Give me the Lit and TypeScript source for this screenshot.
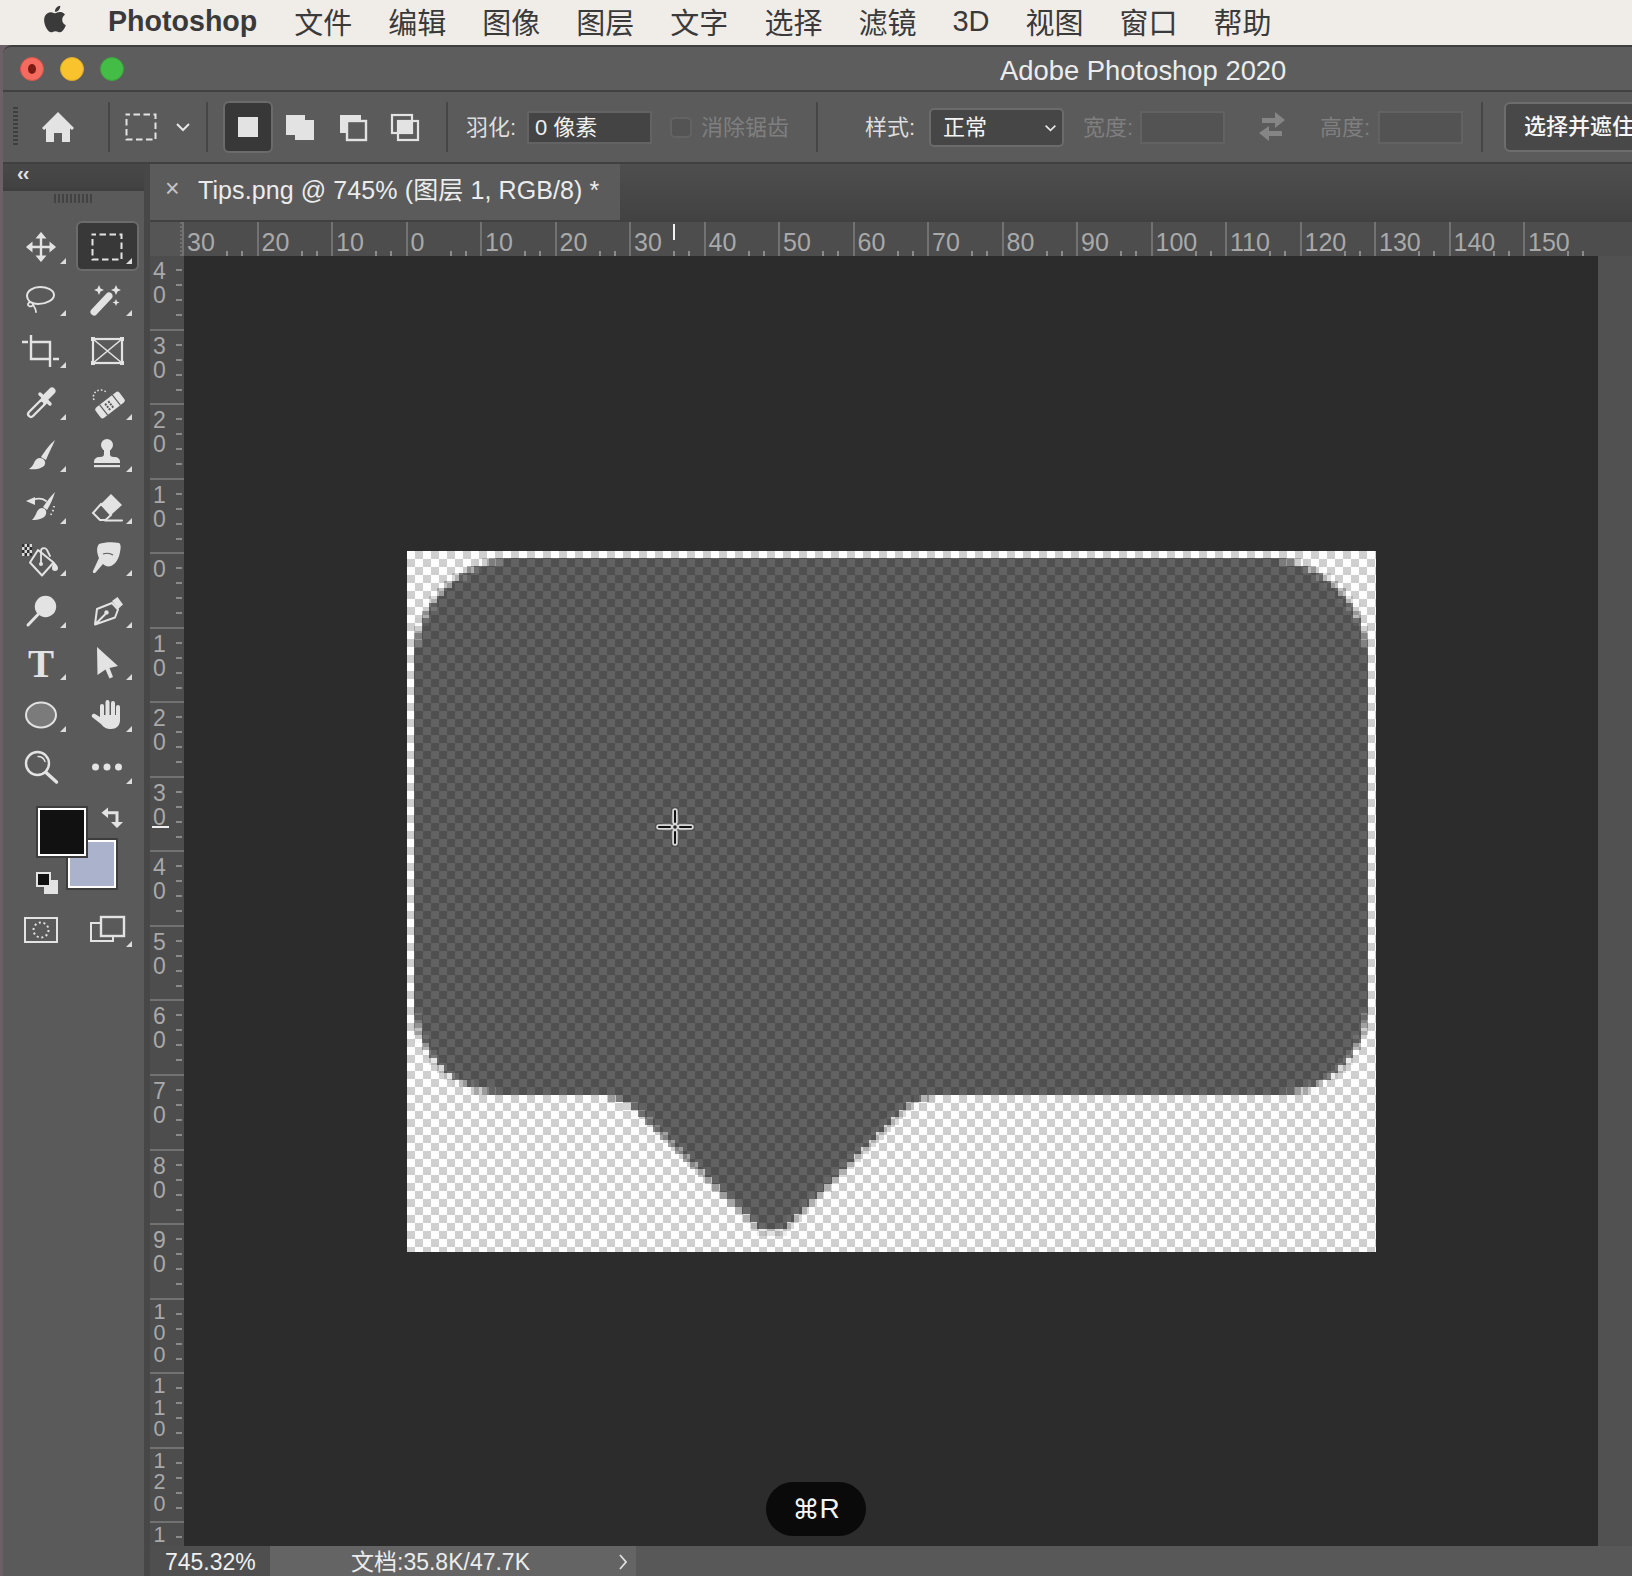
import {LitElement, html, svg, css} from 'lit';
import {customElement} from 'lit/decorators.js';

const INK = '#e3e3e3';
const BG = '#5a5a5a';

const menus = ['文件', '编辑', '图像', '图层', '文字', '选择', '滤镜', '3D', '视图', '窗口', '帮助'];
const hLabels = [30, 20, 10, 0, 10, 20, 30, 40, 50, 60, 70, 80, 90, 100, 110, 120, 130, 140, 150];
const vLabels = [40, 30, 20, 10, 0, 10, 20, 30, 40, 50, 60, 70, 80, 90, 100, 110, 120, 1];

// 40x40 icons, centred on the tool cell
const line = (d: string, w = 2.5) =>
  svg`<path d=${d} fill="none" stroke=${INK} stroke-width=${w} stroke-linecap="round" stroke-linejoin="round"/>`;

const marquee = svg`<rect x="5.5" y="7.5" width="29" height="25" fill="none" stroke=${INK} stroke-width="2" stroke-dasharray="6.5 3.5" stroke-dashoffset="3"/>`;

const tools: {icon: unknown; more: boolean; active?: boolean}[] = [
  {more: true, icon: svg`
    ${line('M20 7v26M7 20h26', 2.4)}
    <path fill=${INK} d="M20 5l5.5 6.5h-11zM20 35l5.5-6.5h-11zM5 20l6.5-5.5v11zM35 20l-6.5-5.5v11z"/>`},
  {more: true, active: true, icon: marquee},
  {more: true, icon: svg`
    ${line('M6 17c0-5 6-9 13-9 7 0 14 3 14 8s-8 9-16 9c-3 0-6-1-8-2-2-2-3-4-3-6z', 2)}
    ${line('M9 23c-2 1-3 3-1 4 2 1 4 0 4-2 0 2 3 4 3 8', 1.8)}`},
  {more: true, icon: svg`
    ${line('M7 33l15-16', 7)}
    ${line('M21.5 17.5l2-2', 2.5)}
    <path fill=${INK} d="M12 6l1.5 3.5L17 11l-3.5 1.5L12 16l-1.5-3.5L7 11l3.5-1.5zM29 6l1.5 3.5L34 11l-3.5 1.5L29 16l-1.5-3.5L24 11l3.5-1.5zM29 20l1 2.5 2.5 1-2.5 1-1 2.5-1-2.5-2.5-1 2.5-1z"/>`},
  {more: true, icon: svg`
    <path fill="none" stroke=${INK} stroke-width="2.4" d="M1 11h6M10 4v24h19V11H10M32 28h6M29 11v25"/>`},
  {more: false, icon: svg`
    <rect x="6" y="8" width="29" height="24" fill="none" stroke=${INK} stroke-width="2.2"/>
    <path d="M6 8l29 24M35 8L6 32" stroke=${INK} stroke-width="1.6"/>
    <path fill=${INK} d="M4 6h4v4H4zM33 6h4v4h-4zM4 30h4v4H4zM33 30h4v4h-4z"/>`},
  {more: true, icon: svg`
    ${line('M24 15l7-7', 7)}
    ${line('M19 11l10 10', 3.5)}
    ${line('M22 19L10 31', 8)}
    <path d="M20.5 20.5L10 31" stroke=${BG} stroke-width="3.4" stroke-linecap="round"/>`},
  {more: true, icon: svg`
    <g transform="rotate(-38 23 22)">
      <rect x="8" y="15.5" width="30" height="13" rx="2.5" fill=${INK}/>
      <path stroke=${BG} stroke-width="1.2" d="M15 15.5v13M31 15.5v13"/>
      <path stroke=${BG} stroke-width="2" stroke-dasharray="2 2" d="M19 19h8M19 22h8M19 25h8"/>
    </g>
    <path fill="none" stroke=${INK} stroke-width="1.6" stroke-dasharray="1.6 2" d="M7 17c-2-5 1-10 7-10 2 0 4 1 5 2"/>`},
  {more: true, icon: svg`
    <path fill=${INK} d="M34 5C31 12 27 20 25 25l-5-3C24 16 29 9 34 5z"/>
    <path fill=${INK} d="M19 23c3 0 6 3 5 6-1 4-8 6-16 5 3-2 4-4 5-6 1-3 3-5 6-5z"/>`},
  {more: true, icon: svg`
    <circle cx="20" cy="10" r="6" fill=${INK}/>
    <path fill=${INK} d="M17 13h6v6c0 2 1 3 4 3 4 0 6 2 6 5v1H7v-1c0-3 2-5 6-5 3 0 4-1 4-3z"/>
    <rect x="7" y="30" width="26" height="2.2" fill=${INK}/>`},
  {more: true, icon: svg`
    <path fill=${INK} d="M5 14l9-4v8z"/>
    ${line('M12 13c5-2 9-2 13 1', 1.8)}
    <path fill=${INK} d="M34 5C32 12 29 18 26 23l-4-3C26 14 30 9 34 5z"/>
    <path fill=${INK} d="M21 21c3 0 5 3 4 6-1 4-7 6-14 6 2-2 3-4 4-6 1-3 3-6 6-6z"/>
    <path d="M33 19c0 3-2 7-4 10" fill="none" stroke=${INK} stroke-width="1.8" stroke-dasharray="1.5 2.5"/>`},
  {more: true, icon: svg`
    <path fill=${INK} d="M24 7l11 11-11 10-10-11z"/>
    <path fill="none" stroke=${INK} stroke-width="2" d="M14 17l10 11-5.5 5H13l-7-7z"/>
    ${line('M18 33.5h17', 2)}`},
  {more: true, icon: svg`
    <path fill="#d8d8d8" d="M1 5h10v12H1z"/>
    <path fill="#2f2f2f" d="M1 5h2.5v3H1zM6 5h2.5v3H6zM3.5 8H6v3H3.5zM8.5 8H11v3H8.5zM1 11h2.5v3H1zM6 11h2.5v3H6zM3.5 14H6v3H3.5zM8.5 14H11v3H8.5z"/>
    <path fill="none" stroke=${INK} stroke-width="2" stroke-linejoin="round" d="M17 11l15.5 12.5L21 36.5 9 23.5z"/>
    ${line('M20 24V12c0-3 4-4 6-1l3 6', 1.8)}
    <circle cx="20" cy="25" r="2" fill=${INK}/>
    <path fill=${INK} d="M33 23c2 2 4 4 4 6a3 3 0 0 1-6 0c0-2 1-4 2-6z"/>`},
  {more: true, icon: svg`
    <path fill=${INK} d="M12 5c6-2 14-2 20-1 2 1 2 5 1 9-1 6-4 12-9 14-3 1-6 0-8-2L9 33c-1 2-4 1-3-1l6-13c-2-5-3-10 0-14z"/>
    <path fill="none" stroke=${BG} stroke-width="1.2" d="M16 15c3-1 7-1 10 1"/>`},
  {more: true, icon: svg`
    <circle cx="24.5" cy="15.5" r="10.7" fill=${INK}/>
    ${line('M17 23.5L7 34', 3)}`},
  {more: true, icon: svg`
    <path fill=${INK} d="M25 10l5.5-4 5.500 7.500-5 4.500z"/>
    <path fill="none" stroke=${INK} stroke-width="2" stroke-linejoin="round" d="M25 12l-15 6-2 15.5 20-7 3-8zM8.5 33L18.5 23"/>
    <circle cx="19.5" cy="21.5" r="2.2" fill=${INK}/>`},
  {more: true, icon: svg`<text x="20" y="33.5" text-anchor="middle" font-family="Liberation Serif" font-weight="700" font-size="39" fill=${INK}>T</text>`},
  {more: true, icon: svg`<path fill=${INK} d="M10 4l21 19-8.5 2 3.5 9-3.5 1.5-4-9-8 5.5z"/>`},
  {more: true, icon: svg`<ellipse cx="20" cy="20" rx="15" ry="12.5" fill="#7b7b7b" stroke=${INK} stroke-width="2"/>`},
  {more: true, icon: svg`
    ${line('M15 25V11M20.5 24V7M26 24V8M31 25V12', 4)}
    <path fill=${INK} d="M13 20h20v5c0 6-4 9-9 9-4 0-7-1-10-5l-9-7c-1-2 1-4 3-3l5 3z"/>`},
  {more: false, icon: svg`
    <circle cx="16.5" cy="16.5" r="11.5" fill="none" stroke=${INK} stroke-width="2.4"/>
    ${line('M25 25.5l10.5 9.5', 3.4)}
    ${line('M17 9.5c3 0 6 2 7 5', 1.4)}`},
  {more: true, icon: svg`
    <circle cx="8.5" cy="20" r="3.5" fill=${INK}/>
    <circle cx="20" cy="20" r="3.5" fill=${INK}/>
    <circle cx="31.5" cy="20" r="3.5" fill=${INK}/>`},
];

// The bubble in Tips.png, drawn as the document's own 7.45px pixels.
const PX = 7.45;
const COLS = 130;
const ROWS = 94;

function insideBubble(x: number, y: number) {
  const [l, t, r, b] = [7, 7, 961, 544];
  if (y >= b - 1 && y <= 679) {
    const d = y - b;
    const flare = Math.max(0, 12 - d) * 1.2;
    if (x >= 213 - flare + d * 1.044 && x <= 511 + flare - d * 0.99) return true;
  }
  if (x < l || x > r || y < t || y > b) return false;
  const rad = y < (t + b) / 2 ? 104 : 94;
  const cx = x < l + rad ? l + rad : x > r - rad ? r - rad : x;
  const cy = y < t + rad ? t + rad : y > b - rad ? b - rad : y;
  return (x - cx) ** 2 + (y - cy) ** 2 <= rad * rad;
}

function bubbleRuns() {
  const out: {x: number; y: number; w: number; c: number}[] = [];
  for (let row = 0; row < ROWS; row++) {
    let open: {x: number; y: number; w: number; c: number} | null = null;
    for (let col = 0; col < COLS; col++) {
      let hits = 0;
      for (let i = 0; i < 5; i++) {
        for (let j = 0; j < 5; j++) {
          if (insideBubble((col + (i + 0.5) / 5) * PX, (row + (j + 0.5) / 5) * PX)) hits++;
        }
      }
      const c = hits / 25;
      if (open && open.c === c) {
        open.w += PX;
      } else {
        open = c > 0 ? {x: col * PX, y: row * PX, w: PX, c} : null;
        if (open) out.push(open);
      }
    }
  }
  return out;
}

const runs = bubbleRuns();

@customElement('app-root')
export class AppRoot extends LitElement {
  static styles = css`
    :host {
      display: flex;
      flex-direction: column;
      width: 1632px;
      height: 1576px;
      overflow: hidden;
      background: #6c6068;
      font-family: "Liberation Sans", "Noto Sans CJK SC", sans-serif;
    }

    svg { display: block; flex: none; }

    .menubar {
      display: flex;
      align-items: center;
      flex: none;
      box-sizing: border-box;
      height: 45px;
      padding: 0 0 3px 39px;
      background: #f0ede8;
      color: #3a3a3a;
      font-size: 29px;
    }
    .apple { width: 32px; height: 36px; margin-top: -4px; }
    .brand { margin-left: 37px; margin-right: 37px; font-weight: 700; font-size: 28.6px; }
    .menus { display: flex; align-items: center; gap: 36px; }
    .menus span { white-space: nowrap; }

    .window {
      display: flex;
      flex-direction: column;
      flex: 1;
      min-height: 0;
      margin-left: 3px;
      border-top: 2px solid #3e3e3e;
      border-top-left-radius: 9px;
      background: #5a5a5a;
      overflow: hidden;
    }

    .titlebar {
      display: flex;
      align-items: center;
      flex: none;
      height: 43px;
      padding-left: 17px;
      border-bottom: 2px solid #414141;
      background: #5d5d5d;
    }
    .light {
      width: 24px;
      height: 24px;
      margin-right: 16px;
      border-radius: 50%;
      box-sizing: border-box;
    }
    .light.red { display: flex; align-items: center; justify-content: center; background: #f56b5f; border: 1px solid #d9544a; }
    .light.red::after { content: ""; width: 8px; height: 10px; border-radius: 50%; background: #7c1a14; }
    .light.yellow { background: #f9c32e; border: 1px solid #dfa829; }
    .light.green { background: #43bd45; border: 1px solid #3aa53c; }
    .title { margin: 4px 0 0 860px; color: #ececec; font-size: 27.4px; white-space: nowrap; }

    .options {
      display: flex;
      align-items: center;
      flex: none;
      height: 70px;
      border-bottom: 2px solid #404040;
      background: #5b5b5b;
      color: #dedede;
      font-size: 22px;
    }
    .options > * { flex: none; }
    .grip-v {
      width: 5px;
      height: 40px;
      margin-left: 10px;
      background: repeating-linear-gradient(#3f3f3f 0 2px, transparent 2px 4px);
    }
    .sep { width: 2px; height: 50px; background: #464646; }
    .seg {
      display: flex;
      align-items: center;
      justify-content: center;
      width: 40px;
      height: 40px;
    }
    .seg.small { width: 20px; }
    .seg.on {
      box-sizing: border-box;
      width: 50px;
      height: 52px;
      border: 2px solid #6b6b6b;
      border-radius: 6px;
      background: #383838;
    }
    .label { box-sizing: border-box; width: 51px; padding-bottom: 4px; white-space: nowrap; }
    .label.off { color: #7f7f7f; }
    .input {
      box-sizing: border-box;
      height: 33px;
      border: 2px solid #636363;
      background: #444;
      color: #f0f0f0;
      line-height: 29px;
      padding-left: 6px;
      white-space: nowrap;
    }
    .input.feather { width: 125px; }
    .input.dim { width: 85px; border-color: #626262; background: #535353; }
    .check {
      box-sizing: border-box;
      width: 22px;
      height: 21px;
      border: 2px solid #636363;
      border-radius: 5px;
      background: #545454;
    }
    .aa { box-sizing: border-box; width: 88px; padding-bottom: 4px; color: #7f7f7f; white-space: nowrap; }
    .select {
      display: flex;
      align-items: center;
      justify-content: space-between;
      box-sizing: border-box;
      width: 135px;
      height: 39px;
      padding: 0 5px 0 12px;
      border: 2px solid #6b6b6b;
      border-radius: 5px;
      background: #464646;
      color: #f4f4f4;
    }
    .select span { margin-top: -4px; }
    .select svg { width: 13px; margin-top: 2px; }
    .refine {
      box-sizing: border-box;
      width: 160px;
      height: 50px;
      padding-left: 18px;
      border: 2px solid #6d6d6d;
      border-radius: 6px;
      background: #484848;
      color: #f6f6f6;
      font-weight: 500;
      line-height: 46px;
      white-space: nowrap;
    }
    .m6 { margin-left: 6px; }
    .m7 { margin-left: 7px; }
    .m9 { margin-left: 9px; }
    .m10 { margin-left: 10px; }
    .m11 { margin-left: 11px; }
    .m12 { margin-left: 12px; }
    .m13 { margin-left: 13px; }
    .m15 { margin-left: 15px; }
    .m18 { margin-left: 18px; }
    .m19 { margin-left: 19px; }
    .m20 { margin-left: 20px; }
    .m21 { margin-left: 21px; }
    .m22 { margin-left: 22px; }
    .m27 { margin-left: 27px; }
    .m28 { margin-left: 28px; }
    .m30 { margin-left: 30px; }
    .m47 { margin-left: 47px; }

    .work { display: flex; flex: 1; min-height: 0; }

    .toolbar {
      flex: none;
      width: 141px;
      border-right: 6px solid #474747;
      background: #5a5a5a;
    }
    .collapse {
      box-sizing: border-box;
      height: 27px;
      padding-left: 14px;
      border-bottom: 3px solid #3f3f3f;
      background: linear-gradient(#484848, #424242);
      color: #e2e2e2;
      font-size: 20px;
      font-weight: 700;
      line-height: 19px;
      letter-spacing: -1px;
    }
    .grip-h {
      width: 38px;
      height: 9px;
      margin: 3px 0 18px 51px;
      background: repeating-linear-gradient(90deg, #434343 0 2px, transparent 2px 4px);
    }
    .tools {
      display: grid;
      grid-template-columns: 66px 66px;
      grid-auto-rows: 52px;
      padding-left: 5px;
    }
    .tool {
      position: relative;
      display: flex;
      align-items: center;
      justify-content: center;
    }
    .tool.more::after {
      content: "";
      position: absolute;
      right: 8px;
      bottom: 9px;
      width: 6px;
      height: 6px;
      background: #dcdcdc;
      clip-path: polygon(100% 0, 100% 100%, 0 100%);
    }
    .tool.active::before {
      content: "";
      position: absolute;
      left: 2px;
      top: 0;
      right: 1px;
      bottom: 2px;
      box-sizing: border-box;
      border: 2px solid #6b6b6b;
      border-radius: 6px;
      background: #383838;
    }
    .tool svg { position: relative; }

    .swatches { position: relative; height: 111px; }
    .swatch {
      position: absolute;
      box-sizing: border-box;
      width: 48px;
      height: 48px;
      border: 2px solid #fff;
      outline: 2px solid #3d3d3d;
      outline-offset: 0;
    }
    .swatch.bg { left: 65px; top: 47px; background: #abb2cb; }
    .swatch.fg { left: 35px; top: 15px; background: #111; }
    .swap { position: absolute; left: 97px; top: 14px; }
    .reset { position: absolute; left: 33px; top: 79px; }

    .doc { display: flex; flex-direction: column; flex: 1; min-width: 0; }

    .tabs {
      display: flex;
      flex: none;
      height: 56px;
      border-bottom: 2px solid #414141;
      background: linear-gradient(#4e4e4e, #424242);
    }
    .tab {
      display: flex;
      align-items: center;
      box-sizing: border-box;
      width: 470px;
      padding: 0 0 8px 15px;
      background: #5b5b5b;
      color: #ececec;
      font-size: 25px;
      letter-spacing: 0.1px;
      white-space: nowrap;
    }
    .tab .close { width: 33px; color: #c4c4c4; }

    .hruler {
      position: relative;
      display: flex;
      flex: none;
      height: 34px;
      overflow: hidden;
      background: #4d4d4d;
      color: #a9a9a9;
      font-size: 25px;
    }
    .corner {
      flex: none;
      box-sizing: border-box;
      width: 32px;
      border-right: 2px dotted #6e6e6e;
      background: #555;
    }
    .hcell {
      flex: none;
      box-sizing: border-box;
      width: 74.5px;
      padding: 6px 0 0 3px;
      border-left: 2px solid #727272;
      line-height: 29px;
      background: repeating-linear-gradient(90deg, #8a8a8a 0 2px, transparent 2px 14.9px) 42px bottom / 30px 5px no-repeat;
    }
    .mark-x { position: absolute; left: 523px; top: 2px; width: 2px; height: 16px; background: #f0f0f0; }

    .middle { display: flex; flex: 1; min-height: 0; }

    .vruler {
      position: relative;
      flex: none;
      width: 34px;
      overflow: hidden;
      background: #4d4d4d;
      color: #a9a9a9;
      font-size: 23px;
    }
    .vcell {
      box-sizing: border-box;
      height: 74.55px;
      padding-top: 3px;
      border-top: 2px solid #727272;
      text-align: center;
      width: 34px;
      padding-right: 15px;
      line-height: 24px;
      background: repeating-linear-gradient(#8a8a8a 0 2px, transparent 2px 14.9px) right 2px top 13px / 6px 60px no-repeat;
    }
    .vcell:first-child { margin-top: -2px; }
    .vcell.wide { padding-top: 2px; font-size: 21.5px; line-height: 21.5px; }
    .mark-y { position: absolute; left: 2px; top: 570px; width: 17px; height: 2px; background: #f0f0f0; }

    .canvas { position: relative; flex: 1; background: #2c2c2c; overflow: hidden; }
    .image {
      position: absolute;
      left: 223px;
      top: 295px;
      background: conic-gradient(#cfcfcf 25%, #fff 0 50%, #cfcfcf 0 75%, #fff 0) 0 0 / 16px 16px;
    }
    .cursor { position: absolute; left: 472px; top: 552px; }
    .pill {
      position: absolute;
      left: 582px;
      top: 1226px;
      display: flex;
      align-items: center;
      justify-content: center;
      width: 100px;
      height: 54px;
      border-radius: 27px;
      background: #0a0a0a;
      color: #f4f4f4;
      font-size: 28px;
    }
    .pill span { font-family: "DejaVu Sans", sans-serif; font-size: 27px; }

    .strip { flex: none; width: 34px; background: #515151; }

    .status {
      display: flex;
      flex: none;
      height: 30px;
      background: #585858;
      font-size: 23px;
      line-height: 32px;
      white-space: nowrap;
    }
    .zoom { box-sizing: border-box; width: 120px; padding-left: 15px; background: #4f4f4f; color: #f0f0f0; }
    .info {
      display: flex;
      justify-content: space-between;
      box-sizing: border-box;
      width: 366px;
      padding: 0 7px 0 81px;
      background: #646464;
      color: #ececec;
    }
  `;

  private optionsBar() {
    const chevron = html`<svg width="16" height="10" viewBox="0 0 16 10"><path d="M2 2l6 6 6-6" fill="none" stroke="#e6e6e6" stroke-width="2"/></svg>`;
    return html`
      <div class="options">
        <div class="grip-v"></div>
        <div class="seg m20">
          <svg width="40" height="40" viewBox="0 0 40 40">
            <path fill=${INK} d="M20 5L36 21l-2 2-2-1.5V35h-8v-9h-8v9H8V21.5L6 23l-2-2z"/>
          </svg>
        </div>
        <div class="sep m30"></div>
        <div class="seg m11">
          <svg width="40" height="40" viewBox="0 0 40 40">${marquee}</svg>
        </div>
        <div class="seg small m12">${chevron}</div>
        <div class="sep m13"></div>
        <div class="seg on m15">
          <svg width="22" height="22" viewBox="0 0 22 22"><rect x="1" y="1" width="20" height="20" fill=${INK}/></svg>
        </div>
        <div class="seg m7">
          <svg width="40" height="40" viewBox="0 0 40 40">
            <path fill=${INK} d="M6 8h19v5h9v20H15v-5H6z"/>
          </svg>
        </div>
        <div class="seg m12">
          <svg width="40" height="40" viewBox="0 0 40 40">
            <path fill=${INK} d="M8 8h21v5H14v13H8z"/>
            <rect x="15" y="14" width="19" height="19" fill="none" stroke=${INK} stroke-width="2.4"/>
          </svg>
        </div>
        <div class="seg m12">
          <svg width="40" height="40" viewBox="0 0 40 40">
            <rect x="8" y="8" width="20" height="18" fill="none" stroke=${INK} stroke-width="2.2"/>
            <rect x="14" y="14" width="20" height="19" fill="none" stroke=${INK} stroke-width="2.2"/>
            <rect x="14" y="14" width="14" height="12" fill=${INK}/>
          </svg>
        </div>
        <div class="sep m22"></div>
        <div class="label m18">羽化:</div>
        <div class="input feather m10">0 像素</div>
        <div class="check m18"></div>
        <div class="aa m9">消除锯齿</div>
        <div class="sep m27"></div>
        <div class="label m47">样式:</div>
        <div class="select m13"><span>正常</span>${chevron}</div>
        <div class="label off m19">宽度:</div>
        <div class="input dim m6"></div>
        <div class="seg m27">
          <svg width="36" height="36" viewBox="0 0 36 36">
            <path fill="#858585" d="M21 3l10 8-10 8v-5H8V9h13zM15 17v5h13v5H15v5L5 24z"/>
          </svg>
        </div>
        <div class="label off m28">高度:</div>
        <div class="input dim m7"></div>
        <div class="sep m18"></div>
        <div class="refine m21">选择并遮住</div>
      </div>
    `;
  }

  private toolbar() {
    return html`
      <aside class="toolbar">
        <div class="collapse">‹‹</div>
        <div class="grip-h"></div>
        <div class="tools">
          ${tools.map((t) => html`
            <div class="tool ${t.more ? 'more' : ''} ${t.active ? 'active' : ''}">
              <svg width="40" height="40" viewBox="0 0 40 40">${t.icon}</svg>
            </div>
          `)}
        </div>
        <div class="swatches">
          <div class="swatch bg"></div>
          <div class="swatch fg"></div>
          <svg class="swap" width="24" height="22" viewBox="0 0 24 22">
            <path fill=${INK} d="M1.500 5.700L8 .5v3.700h10.500V15H23l-6 6-6-6h4.500V7.200H8V11z"/>
          </svg>
          <svg class="reset" width="22" height="22" viewBox="0 0 22 22">
            <rect x="8" y="8" width="14" height="14" fill=${INK}/>
            <rect x="1" y="1" width="13" height="13" fill="#111" stroke=${INK} stroke-width="2"/>
          </svg>
        </div>
        <div class="tools">
          <div class="tool">
            <svg width="40" height="40" viewBox="0 0 40 40">
              <rect x="4" y="8" width="32" height="24" fill="none" stroke=${INK} stroke-width="2"/>
              <circle cx="20" cy="20" r="7.5" fill="none" stroke=${INK} stroke-width="2" stroke-dasharray="2 2.7"/>
            </svg>
          </div>
          <div class="tool more">
            <svg width="40" height="40" viewBox="0 0 40 40">
              <rect x="4" y="13" width="22" height="18" fill="none" stroke=${INK} stroke-width="2"/>
              <rect x="14" y="7" width="23" height="19" fill=${BG} stroke=${INK} stroke-width="2.4"/>
            </svg>
          </div>
        </div>
      </aside>
    `;
  }

  override render() {
    return html`
      <div class="menubar">
        <svg class="apple" viewBox="0 0 24 24">
          <path fill="#3a3a3a" d="M18.71 19.5c-.83 1.24-1.71 2.45-3.05 2.47-1.34.03-1.77-.79-3.29-.79-1.53 0-2 .77-3.27.82-1.31.05-2.3-1.32-3.14-2.53C4.25 17 2.94 12.45 4.7 9.39c.87-1.52 2.43-2.48 4.12-2.51 1.28-.02 2.5.87 3.29.87.78 0 2.26-1.07 3.81-.91.65.03 2.47.26 3.64 1.98-.09.06-2.17 1.28-2.15 3.81.03 3.02 2.65 4.03 2.68 4.04-.03.07-.42 1.44-1.38 2.83M13 3.5c.73-.83 1.94-1.46 2.94-1.5.13 1.17-.34 2.35-1.04 3.19-.69.85-1.83 1.51-2.95 1.42-.15-1.15.41-2.35 1.05-3.11z"/>
        </svg>
        <span class="brand">Photoshop</span>
        <div class="menus">${menus.map((m) => html`<span>${m}</span>`)}</div>
      </div>

      <div class="window">
        <div class="titlebar">
          <div class="light red"></div>
          <div class="light yellow"></div>
          <div class="light green"></div>
          <div class="title">Adobe Photoshop 2020</div>
        </div>

        ${this.optionsBar()}

        <div class="work">
          ${this.toolbar()}

          <div class="doc">
            <div class="tabs">
              <div class="tab"><span class="close">×</span>Tips.png @ 745% (图层 1, RGB/8) *</div>
            </div>
            <div class="hruler">
              <div class="corner"></div>
              ${hLabels.map((l) => html`<div class="hcell">${l}</div>`)}
              <div class="mark-x"></div>
            </div>
            <div class="middle">
              <div class="vruler">
                ${vLabels.map((l) => html`
                  <div class="vcell ${l >= 100 || l === 1 ? 'wide' : ''}">
                    ${[...String(l)].map((d) => html`<div>${d}</div>`)}
                  </div>
                `)}
                <div class="mark-y"></div>
              </div>
              <div class="canvas">
                <svg class="image" width="969" height="701" viewBox="0 0 969 701" shape-rendering="crispEdges">
                  ${runs.map((r) => svg`<rect x=${r.x} y=${r.y} width=${r.w} height=${PX} fill="#000" fill-opacity=${0.615 * r.c}/>`)}
                </svg>
                <svg class="cursor" width="38" height="38" viewBox="0 0 38 38">
                  <g stroke="#d8d8d8" stroke-width="5.5" stroke-linecap="round">
                    <path d="M19 3v11M19 24v11M3 19h11M24 19h11"/>
                  </g>
                  <g stroke="#111" stroke-width="2" stroke-linecap="round">
                    <path d="M19 3v11M19 24v11M3 19h11M24 19h11"/>
                  </g>
                  <circle cx="19" cy="19" r="2.5" fill="#222" stroke="#d8d8d8" stroke-width="1.5"/>
                </svg>
                <div class="pill"><span>⌘</span>R</div>
              </div>
              <div class="strip"></div>
            </div>
            <div class="status">
              <div class="zoom">745.32%</div>
              <div class="info">
                <span>文档:35.8K/47.7K</span>
                <svg width="12" height="30" viewBox="0 0 12 30"><path d="M3 9l6 7-6 7" fill="none" stroke="#e0e0e0" stroke-width="1.8"/></svg>
              </div>
            </div>
          </div>
        </div>
      </div>
    `;
  }
}
